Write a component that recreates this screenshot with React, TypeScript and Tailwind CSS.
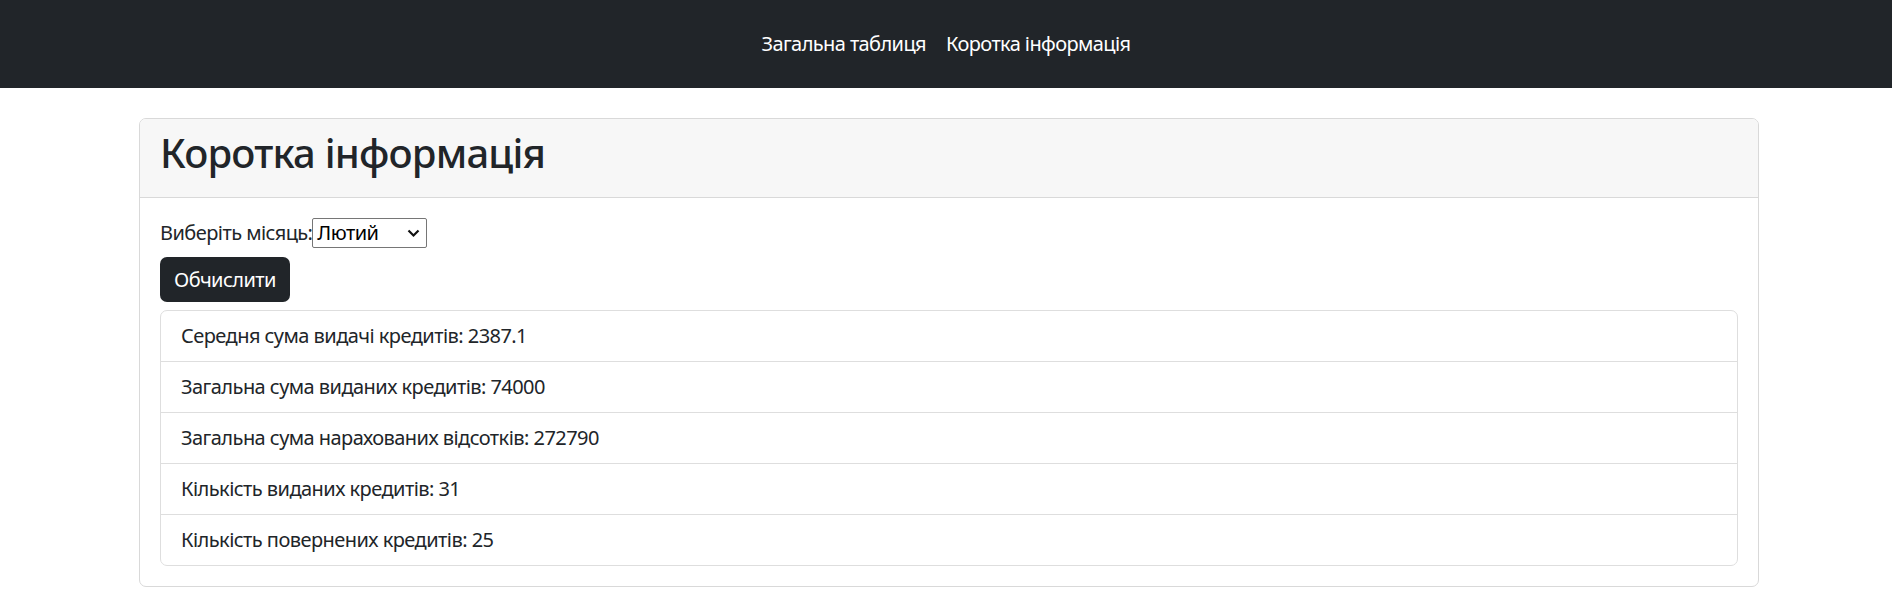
import React from "react";

const items = [
  "Середня сума видачі кредитів: 2387.1",
  "Загальна сума виданих кредитів: 74000",
  "Загальна сума нарахованих відсотків: 272790",
  "Кількість виданих кредитів: 31",
  "Кількість повернених кредитів: 25",
];

export default function App() {
  return (
    <div className="min-h-screen bg-white font-['Noto_Sans',sans-serif] text-[#212529]">
      <nav className="h-[88px] bg-[#212529] flex items-center justify-center">
        <a className="px-[10px] text-[20px] leading-[30px] tracking-[-0.6px] text-white">Загальна таблиця</a>
        <a className="px-[10px] text-[20px] leading-[30px] tracking-[-0.6px] text-white">Коротка інформація</a>
      </nav>
      <div className="mt-[30px] ml-[139px] w-[1620px] border border-[#d9d9d9] rounded-[7px] overflow-hidden">
        <div className="bg-[#f7f7f7] border-b border-[#d9d9d9] px-[20px] pt-[10px] pb-[10px]">
          <h2 className="text-[40px] leading-[48px] font-medium tracking-[-0.8px] mb-[10px]">Коротка інформація</h2>
        </div>
        <div className="p-[20px] tracking-[-0.55px]">
          <div className="flex items-center h-[30px] text-[20px] leading-[30px]">
            <span>Виберіть місяць:</span>
            <div className="flex items-center justify-between w-[115px] h-[30px] border border-[#767676] rounded-[2px] pl-[4px] pr-[6px] text-black">
              <span>Лютий</span>
              <svg width="13" height="9" viewBox="0 0 13 9" fill="none">
                <path d="M1.5 1.5 L6.5 6.5 L11.5 1.5" stroke="#111" strokeWidth="2.2" />
              </svg>
            </div>
          </div>
          <button className="mt-[9px] h-[45px] w-[130px] rounded-[7px] bg-[#212529] text-white text-[20px] leading-[30px]">
            Обчислити
          </button>
          <div className="mt-[8px] border border-[#dedede] rounded-[7px]">
            {items.map((t, i) => (
              <div
                key={i}
                className={`px-[20px] py-[10px] text-[20px] leading-[30px] ${i > 0 ? "border-t border-[#dedede]" : ""}`}
              >
                {t}
              </div>
            ))}
          </div>
        </div>
      </div>
    </div>
  );
}
